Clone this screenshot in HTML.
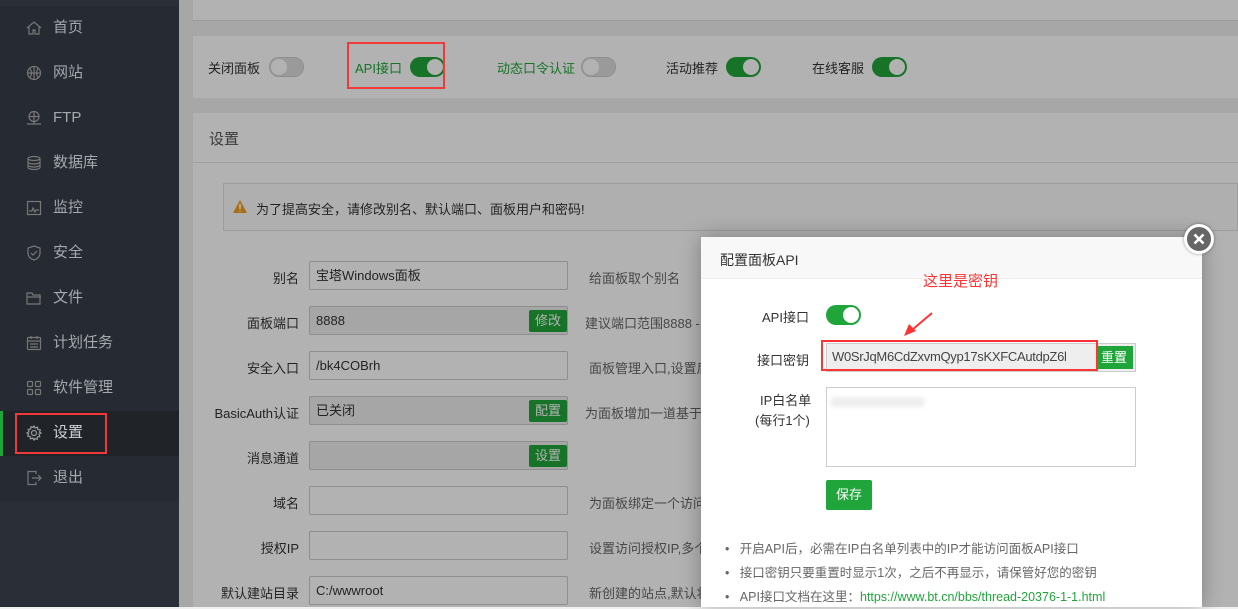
<!DOCTYPE html>
<html><head><meta charset="utf-8"><style>
*{margin:0;padding:0;box-sizing:border-box}
body{width:1238px;height:607px;overflow:hidden;position:relative;background:#f0f0f0;font-family:"Liberation Sans","Noto Sans CJK SC",sans-serif;font-size:13px;color:#333}
.a{position:absolute}
.side{left:0;top:0;width:179px;height:607px;background:#2a2e36}
.nav{position:absolute;left:0;width:179px;height:45px;background:#262a32;color:#a5a8ad;font-size:15px}
.nav span{position:absolute;left:53px;top:12px;line-height:20px}
.nav svg{position:absolute;left:26px;top:14px}
.card{background:#fff}
.lbl{color:#333;font-size:13px;text-align:right;width:120px}
.inp{border:1px solid #ccc;background:#fff;border-radius:2px;height:29px;width:259px;left:309px;padding:6px 6px;font-size:13px;color:#333;line-height:16px}
.inp.d{background:#eee}
.btn{background:#20a53a;color:#fff;font-size:13px;border-radius:2px;height:22px;padding:2px 6px;line-height:18px}
.tip{color:#666;font-size:13px;left:589px}
.tg{width:35px;height:20px;border-radius:10px}
.tg i{position:absolute;top:2px;width:16px;height:16px;border-radius:50%;background:#fff}
</style></head><body>
<div class="a card" style="left:193px;top:0;width:1045px;height:21px;border-bottom:1px solid #ddd"></div>
<div class="a card" style="left:193px;top:36px;width:1045px;height:62px"></div>
<div class="a" style="left:208px;top:58px">关闭面板</div>
<div class="a tg" style="left:269px;top:57px;background:#ddd;border:1px solid #ccc"><i style="left:1px;top:1px"></i></div>
<div class="a" style="left:355px;top:58px;color:#20a53a">API接口</div>
<div class="a tg" style="left:410px;top:57px;background:#20a53a"><i style="left:17px"></i></div>
<div class="a" style="left:497px;top:58px;color:#20a53a">动态口令认证</div>
<div class="a tg" style="left:581px;top:57px;background:#ddd;border:1px solid #ccc"><i style="left:1px;top:1px"></i></div>
<div class="a" style="left:666px;top:58px">活动推荐</div>
<div class="a tg" style="left:726px;top:57px;background:#20a53a"><i style="left:17px"></i></div>
<div class="a" style="left:812px;top:58px">在线客服</div>
<div class="a tg" style="left:872px;top:57px;background:#20a53a"><i style="left:17px"></i></div>

<div class="a card" style="left:193px;top:113px;width:1045px;height:494px"></div>
<div class="a" style="left:193px;top:162px;width:1045px;height:1px;background:#e5e5e5"></div>
<div class="a" style="left:209px;top:128px;font-size:15px;color:#555">设置</div>
<div class="a" style="left:223px;top:183px;width:1015px;height:48px;border:1px solid #e0e0e0;background:#fbfbfb"></div>
<svg class="a" style="left:233px;top:200px" width="14" height="13" viewBox="0 0 14 13"><path d="M7 0L14 13H0z" fill="#f0a020"/><path d="M7 4v5M7 10.5v1" stroke="#fff" stroke-width="1.6"/></svg>
<div class="a" style="left:256px;top:199px;color:#333">为了提高安全，请修改别名、默认端口、面板用户和密码!</div>

<div class="a lbl" style="left:179px;top:268px">别名</div><div class="a inp" style="top:261px">宝塔Windows面板</div><div class="a tip" style="top:268px">给面板取个别名</div>
<div class="a lbl" style="left:179px;top:313px">面板端口</div><div class="a inp d" style="top:306px">8888</div><div class="a btn" style="left:529px;top:310px">修改</div><div class="a tip" style="left:585px;top:313px">建议端口范围8888 - 6</div>
<div class="a lbl" style="left:179px;top:358px">安全入口</div><div class="a inp" style="top:351px">/bk4COBrh</div><div class="a tip" style="top:358px">面板管理入口,设置后</div>
<div class="a lbl" style="left:179px;top:403px">BasicAuth认证</div><div class="a inp d" style="top:396px">已关闭</div><div class="a btn" style="left:529px;top:400px">配置</div><div class="a tip" style="left:585px;top:403px">为面板增加一道基于B</div>
<div class="a lbl" style="left:179px;top:448px">消息通道</div><div class="a inp d" style="top:441px"></div><div class="a btn" style="left:529px;top:445px">设置</div>
<div class="a lbl" style="left:179px;top:493px">域名</div><div class="a inp" style="top:486px"></div><div class="a tip" style="top:493px">为面板绑定一个访问域</div>
<div class="a lbl" style="left:179px;top:538px">授权IP</div><div class="a inp" style="top:531px"></div><div class="a tip" style="top:538px">设置访问授权IP,多个</div>
<div class="a lbl" style="left:179px;top:583px">默认建站目录</div><div class="a inp" style="top:576px">C:/wwwroot</div><div class="a tip" style="top:583px">新创建的站点,默认将</div>

<!-- overlay -->
<div class="a" style="left:0;top:0;width:1238px;height:607px;background:rgba(0,0,0,0.3)"></div>
<div class="a" style="left:347px;top:42px;width:98px;height:47px;border:2px solid #f03a3a"></div>

<div class="a side">
<div class="nav" style="top:6px"><svg width="16" height="16" viewBox="0 0 16 16" fill="none" stroke="#777" stroke-width="1.2"><path d="M1 8L8 2l7 6M3 7v7h4v-4h2v4h4V7"/></svg><span>首页</span></div>
<div class="nav" style="top:51px"><svg width="16" height="16" viewBox="0 0 16 16" fill="none" stroke="#777" stroke-width="1.2"><circle cx="8" cy="8" r="6.5"/><path d="M1.5 8h13M8 1.5v13M4 3.5q3 4.5 0 9M12 3.5q-3 4.5 0 9"/></svg><span>网站</span></div>
<div class="nav" style="top:96px"><svg width="16" height="16" viewBox="0 0 16 16" fill="none" stroke="#777" stroke-width="1.2"><circle cx="8" cy="6.5" r="5"/><path d="M3 6.5h10M8 1.5v10M1 14h14M8 11.5v2.5"/></svg><span>FTP</span></div>
<div class="nav" style="top:141px"><svg width="16" height="16" viewBox="0 0 16 16" fill="none" stroke="#777" stroke-width="1.2"><ellipse cx="8" cy="3.5" rx="6" ry="2"/><path d="M2 3.5v9c0 1 3 2 6 2s6-1 6-2v-9M2 7c0 1 3 2 6 2s6-1 6-2M2 10c0 1 3 2 6 2s6-1 6-2"/></svg><span>数据库</span></div>
<div class="nav" style="top:186px"><svg width="16" height="16" viewBox="0 0 16 16" fill="none" stroke="#777" stroke-width="1.2"><rect x="1.5" y="1.5" width="13" height="13"/><path d="M3 11h3l1-3 2 4 1-2h3"/></svg><span>监控</span></div>
<div class="nav" style="top:231px"><svg width="16" height="16" viewBox="0 0 16 16" fill="none" stroke="#777" stroke-width="1.2"><path d="M8 1l6 2v5c0 4-3 6-6 7-3-1-6-3-6-7V3z"/><path d="M5 8l2 2 4-4"/></svg><span>安全</span></div>
<div class="nav" style="top:276px"><svg width="16" height="16" viewBox="0 0 16 16" fill="none" stroke="#777" stroke-width="1.2"><path d="M1 3h5l1 2h7v9H1z"/><path d="M1 7h14"/></svg><span>文件</span></div>
<div class="nav" style="top:321px"><svg width="16" height="16" viewBox="0 0 16 16" fill="none" stroke="#777" stroke-width="1.2"><rect x="1.5" y="2.5" width="13" height="12" rx="1"/><path d="M1.5 6h13M5 1v3M11 1v3M4 9h8M4 12h8"/></svg><span>计划任务</span></div>
<div class="nav" style="top:366px"><svg width="16" height="16" viewBox="0 0 16 16" fill="none" stroke="#777" stroke-width="1.2"><rect x="1.5" y="1.5" width="5" height="5" rx="1"/><rect x="9.5" y="1.5" width="5" height="5" rx="1"/><rect x="1.5" y="9.5" width="5" height="5" rx="1"/><rect x="9.5" y="9.5" width="5" height="5" rx="1"/></svg><span>软件管理</span></div>
<div class="nav" style="top:411px;background:#202328;border-left:3px solid #20a53a"><svg width="16" height="16" viewBox="0 0 16 16" fill="none" stroke="#999" stroke-width="1.2" style="left:23px"><circle cx="8" cy="8" r="2.5"/><path d="M8 1l1.3 2 2.3-.8.3 2.4 2.4.3-.8 2.3L15 8l-2 1.3.8 2.3-2.4.3-.3 2.4-2.3-.8L8 15l-1.3-2-2.3.8-.3-2.4-2.4-.3.8-2.3L1 8l2-1.3-.8-2.3 2.4-.3.3-2.4 2.3.8z"/></svg><span style="left:50px;color:#d0d2d5">设置</span></div>
<div class="nav" style="top:456px"><svg width="16" height="16" viewBox="0 0 16 16" fill="none" stroke="#777" stroke-width="1.2"><path d="M10 4V1.5H2v13h8V12M6 8h9M12 5l3 3-3 3"/></svg><span>退出</span></div>
</div>
<div class="a" style="left:15px;top:413px;width:92px;height:41px;border:2px solid #f03a3a"></div>

<!-- modal -->
<div class="a" style="left:701px;top:237px;width:501px;height:370px;background:#fff;box-shadow:0 0 20px rgba(0,0,0,.3)"></div>
<div class="a" style="left:701px;top:237px;width:501px;height:42px;background:#f8f8f8;border-bottom:1px solid #eee"></div>
<div class="a" style="left:720px;top:250px;font-size:14px;color:#333">配置面板API</div>
<div class="a" style="left:1184px;top:224px;width:30px;height:30px;border-radius:50%;background:#666;border:3px solid #fff;box-shadow:0 0 3px rgba(0,0,0,.4)"><svg width="24" height="24" viewBox="0 0 24 24" style="position:absolute;left:0;top:0"><path d="M7.5 7.5l9 9M16.5 7.5l-9 9" stroke="#fff" stroke-width="2.6"/></svg></div>
<div class="a" style="left:923px;top:270px;font-size:15px;color:#f33">这里是密钥</div>
<svg class="a" style="left:900px;top:310px" width="36" height="28" viewBox="0 0 36 28"><path d="M32 3L12 20" stroke="#f33" stroke-width="2"/><path d="M4 26l5-12 7 7z" fill="#f33"/></svg>
<div class="a" style="left:762px;top:307px;color:#333">API接口</div>
<div class="a tg" style="left:826px;top:305px;background:#20a53a;width:35px;height:20px"><i style="left:17px;background:#fff"></i></div>
<div class="a" style="left:757px;top:350px;color:#333">接口密钥</div>
<div class="a" style="left:826px;top:343px;width:310px;height:29px;background:#eee;border:1px solid #ccc"></div>
<div class="a" style="left:832px;top:349px;color:#444;font-size:13px;letter-spacing:-0.3px">W0SrJqM6CdZxvmQyp17sKXFCAutdpZ6l</div>
<div class="a" style="left:1098px;top:346px;width:35px;height:23px;background:#20a53a;color:#fff;font-size:13px;padding:3px 3px;line-height:17px">重置</div>
<div class="a" style="left:821px;top:340px;width:277px;height:31px;border:2px solid #f33"></div>
<div class="a" style="left:760px;top:390px;color:#333">IP白名单</div>
<div class="a" style="left:755px;top:410px;color:#333">(每行1个)</div>
<div class="a" style="left:826px;top:387px;width:310px;height:80px;border:1px solid #ccc"></div>
<div class="a" style="left:830px;top:397px;width:95px;height:10px;background:#eee;border-radius:5px;filter:blur(2px)"></div>
<div class="a" style="left:826px;top:480px;width:46px;height:30px;background:#20a53a;color:#fff;border-radius:2px;padding:7px 10px;font-size:13px;line-height:16px">保存</div>
<div class="a" style="left:725px;top:537px;color:#666;font-size:12.5px;line-height:24px">
<div>•&nbsp;&nbsp;&nbsp;开启API后，必需在IP白名单列表中的IP才能访问面板API接口</div>
<div>•&nbsp;&nbsp;&nbsp;接口密钥只要重置时显示1次，之后不再显示，请保管好您的密钥</div>
<div>•&nbsp;&nbsp;&nbsp;API接口文档在这里：<span style="color:#20a53a">https://www.bt.cn/bbs/thread-20376-1-1.html</span></div>
</div>
</body></html>
